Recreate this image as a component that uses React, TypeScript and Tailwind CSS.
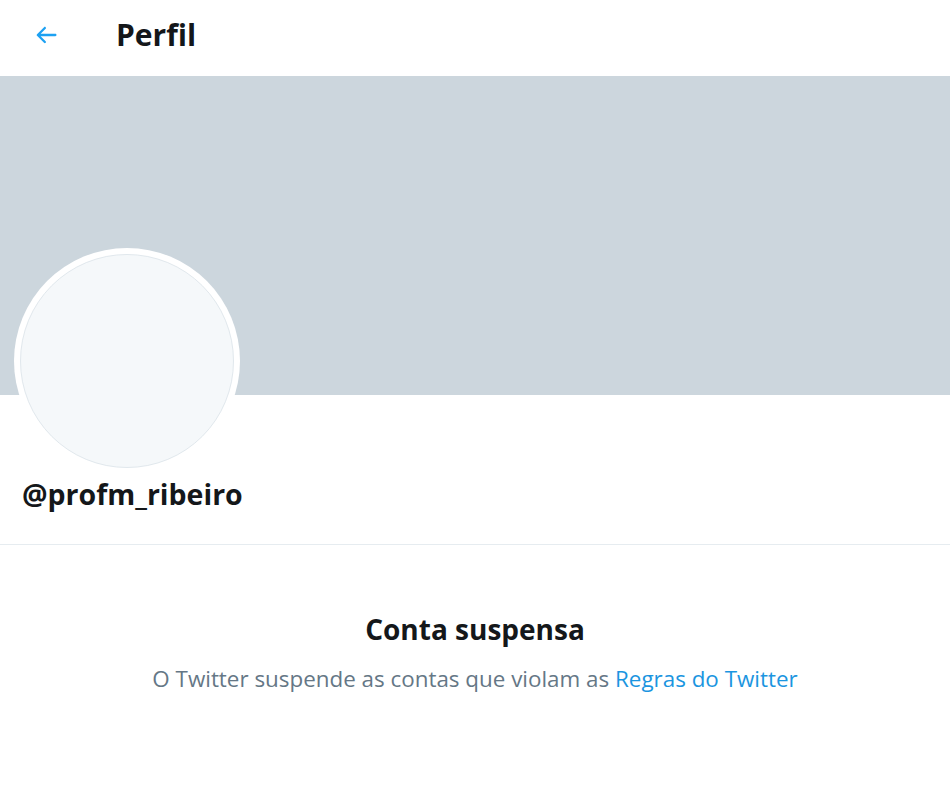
import React from "react";

export default function App() {
  return (
    <div
      className="w-[950px] h-[795px] bg-white overflow-hidden"
      style={{ fontFamily: '"Open Sans", "Noto Sans", sans-serif' }}
    >
      <div className="h-[76px] flex items-center">
        <div className="w-[116px] pl-[32px] flex items-center -mt-[7px]">
          <svg width="28" height="28" viewBox="0 0 24 24" className="text-[#1da1f2]">
            <path
              fill="currentColor"
              d="M20 11H7.414l4.293-4.293c.39-.39.39-1.023 0-1.414s-1.023-.39-1.414 0l-6 6c-.39.39-.39 1.023 0 1.414l6 6c.195.195.45.293.707.293s.512-.098.707-.293c.39-.39.39-1.023 0-1.414L7.414 13H20c.553 0 1-.447 1-1s-.447-1-1-1z"
            />
          </svg>
        </div>
        <div className="text-[30px] font-bold text-[#14171a] leading-none -mt-[7px]">Perfil</div>
      </div>
      <div className="h-[319px] bg-[#ccd6dd]" />
      <div className="relative h-[150px] border-b border-[#e6ecf0]">
        <div className="absolute left-[14px] -top-[147px] w-[226px] h-[226px] rounded-full bg-white p-[6px]">
          <div className="w-full h-full rounded-full bg-[#f5f8fa] border border-[#e1e8ed]" />
        </div>
        <div className="absolute left-[22px] top-[85px] text-[28.5px] font-bold text-[#14171a] leading-none">
          @profm_ribeiro
        </div>
      </div>
      <div className="flex flex-col items-center pt-[70px]">
        <div className="text-[28px] font-bold text-[#14171a] leading-none">Conta suspensa</div>
        <div className="mt-[25px] text-[22.4px] text-[#657786] leading-none">
          O Twitter suspende as contas que violam as{" "}
          <span className="text-[#1b95e0]">Regras do Twitter</span>
        </div>
      </div>
    </div>
  );
}
